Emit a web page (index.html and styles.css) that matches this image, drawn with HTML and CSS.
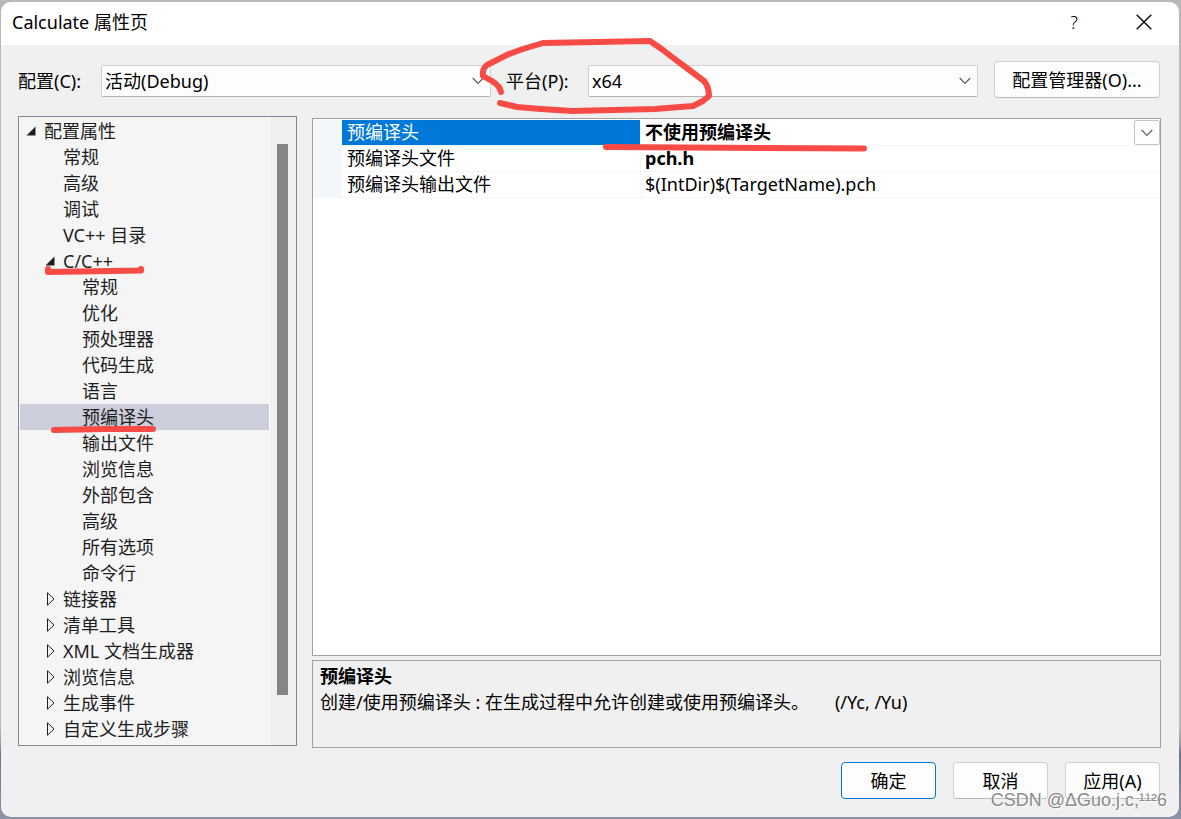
FILE: index.html
```html
<!DOCTYPE html>
<html lang="zh-CN">
<head>
<meta charset="utf-8">
<title>Calculate 属性页</title>
<link rel="stylesheet" href="styles.css">
</head>
<body>
<main class="dialog">
  <header class="titlebar">
    <h1 class="title">Calculate 属性页</h1>
    <button class="caption-btn help" type="button" aria-label="帮助">?</button>
    <button class="caption-btn" type="button" aria-label="关闭">
      <svg width="16" height="16" viewBox="0 0 16 16" fill="none" stroke="#111" stroke-width="1.5"><path d="M.7.7l14.6 14.6M15.3.7L.7 15.3"/></svg>
    </button>
  </header>

  <div class="toolbar">
    <label for="config">配置(C):</label>
    <div class="combo">
      <select id="config"><option>活动(Debug)</option></select>
      <svg class="chevron" width="12" height="8" viewBox="0 0 12 8"><path d="M.7 1l5.3 5.3L11.3 1"/></svg>
    </div>
    <label class="second" for="platform">平台(P):</label>
    <div class="combo">
      <select id="platform"><option>x64</option></select>
      <svg class="chevron" width="12" height="8" viewBox="0 0 12 8"><path d="M.7 1l5.3 5.3L11.3 1"/></svg>
    </div>
    <button class="btn manager" type="button">配置管理器(O)...</button>
  </div>

  <div class="content">
    <nav class="tree-box">
      <ul class="tree">
        <li><div class="node"><svg class="arrow" viewBox="0 0 10 14"><path class="open" d="M9.500 2.500v9H.5z"/></svg>配置属性</div>
          <ul>
            <li><div class="node leaf">常规</div></li>
            <li><div class="node leaf">高级</div></li>
            <li><div class="node leaf">调试</div></li>
            <li><div class="node leaf">VC++ 目录</div></li>
            <li><div class="node"><svg class="arrow" viewBox="0 0 10 14"><path class="open" d="M9.500 2.500v9H.5z"/></svg>C/C++</div>
              <ul>
                <li><div class="node leaf">常规</div></li>
                <li><div class="node leaf">优化</div></li>
                <li><div class="node leaf">预处理器</div></li>
                <li><div class="node leaf">代码生成</div></li>
                <li><div class="node leaf">语言</div></li>
                <li><div class="node leaf selected">预编译头</div></li>
                <li><div class="node leaf">输出文件</div></li>
                <li><div class="node leaf">浏览信息</div></li>
                <li><div class="node leaf">外部包含</div></li>
                <li><div class="node leaf">高级</div></li>
                <li><div class="node leaf">所有选项</div></li>
                <li><div class="node leaf">命令行</div></li>
              </ul>
            </li>
            <li><div class="node"><svg class="arrow" viewBox="0 0 10 14"><path class="closed" d="M2.500.8v12.400l6.500-6.200z"/></svg>链接器</div></li>
            <li><div class="node"><svg class="arrow" viewBox="0 0 10 14"><path class="closed" d="M2.500.8v12.400l6.500-6.200z"/></svg>清单工具</div></li>
            <li><div class="node"><svg class="arrow" viewBox="0 0 10 14"><path class="closed" d="M2.500.8v12.400l6.500-6.200z"/></svg>XML 文档生成器</div></li>
            <li><div class="node"><svg class="arrow" viewBox="0 0 10 14"><path class="closed" d="M2.500.8v12.400l6.500-6.200z"/></svg>浏览信息</div></li>
            <li><div class="node"><svg class="arrow" viewBox="0 0 10 14"><path class="closed" d="M2.500.8v12.400l6.500-6.200z"/></svg>生成事件</div></li>
            <li><div class="node"><svg class="arrow" viewBox="0 0 10 14"><path class="closed" d="M2.500.8v12.400l6.500-6.200z"/></svg>自定义生成步骤</div></li>
          </ul>
        </li>
      </ul>
      <div class="scrollbar"><div class="thumb"></div></div>
    </nav>

    <div class="right">
      <section class="grid-box">
        <table class="props">
          <colgroup><col class="c-gutter"><col class="c-name"><col></colgroup>
          <tbody>
            <tr class="current"><td class="gutter"></td><th scope="row">预编译头</th>
              <td><div class="value"><b>不使用预编译头</b><button class="drop" type="button" aria-label="展开"><svg class="chev" width="12" height="8" viewBox="0 0 12 8"><path d="M.7 1l5.3 5.3L11.3 1"/></svg></button></div></td></tr>
            <tr><td class="gutter"></td><th scope="row">预编译头文件</th><td><b>pch.h</b></td></tr>
            <tr><td class="gutter"></td><th scope="row">预编译头输出文件</th><td>$(IntDir)$(TargetName).pch</td></tr>
          </tbody>
        </table>
      </section>
      <section class="desc">
        <h2>预编译头</h2>
        <p><span>创建/使用预编译头 : 在生成过程中允许创建或使用预编译头。</span><span>(/Yc, /Yu)</span></p>
      </section>
    </div>
  </div>

  <footer class="actions">
    <button class="btn primary" type="button">确定</button>
    <button class="btn" type="button">取消</button>
    <button class="btn" type="button">应用(A)</button>
  </footer>
</main>

<svg class="ink" width="1181" height="819" viewBox="0 0 1181 819" aria-hidden="true">
  <path d="M501 92Q500 86 492 81L483 76Q482 69 487 65L509 54L523 49L543 43L650 41L663 50L672 57L684 66L704 81Q709 87 709 96L703 101L693 106L655 109L572 111L541 109L517 107L500 103"/>
  <path d="M606 147L864 148.500"/>
  <path d="M48 269V272L141 270.500V269"/>
  <path d="M54 430L105 429L153 429"/>
</svg>
<div class="watermark">CSDN @ΔGuo.j.c,¹¹²6</div>
</body>
</html>
```
FILE: styles.css
```css
* { box-sizing: border-box; }

body {
  margin: 0;
  min-height: 100vh;
  padding: 2px 2px 2px 1px;
  display: flex;
  position: relative;
  overflow: hidden;
  background: linear-gradient(#b8b8b8 0 728px, #a5a5aa 740px, #6d7290 755px, #8f93a6 100%);
  font: 18px/26px "Noto Sans", "Noto Sans CJK SC", sans-serif;
  color: #000;
}

button, select { font: inherit; color: inherit; }

.dialog {
  flex: 1;
  display: flex;
  flex-direction: column;
  background: #f0f0f0;
  border-radius: 10px;
  overflow: hidden;
}

.titlebar {
  display: flex;
  align-items: center;
  height: 43px;
  padding: 0 0 3px 11px;
  background: #fff;
}

.title {
  flex: 1;
  margin: 0;
  font-size: 18px;
  font-weight: 400;
}

.caption-btn {
  width: 70px;
  height: 40px;
  padding: 0;
  border: 0;
  background: none;
  display: flex;
  align-items: center;
  justify-content: center;
}

.help { font-weight: 300; }

.toolbar {
  display: grid;
  grid-template-columns: 83px 1fr 97px 1fr 182px;
  align-items: end;
  padding: 16px 19px 0 17px;
}

.toolbar label { line-height: 34px; }
.second { padding-left: 15px; }

.combo {
  position: relative;
  padding-bottom: 1px;
}

.combo select {
  appearance: none;
  display: block;
  width: 100%;
  height: 32px;
  padding: 0 30px 0 3px;
  border: 1px solid #d0d0d0;
  border-bottom-color: #b4b4b4;
  border-radius: 2px;
  background: #fdfdfd;
}

.chevron {
  position: absolute;
  right: 7px;
  top: 12px;
}

.chevron, .chev {
  fill: none;
  stroke: #5c5c5c;
  stroke-width: 1.2;
}

.btn {
  width: 95px;
  height: 37px;
  padding: 0;
  border: 1px solid #d0d0d0;
  border-bottom-color: #bababa;
  border-radius: 4px;
  background: #fdfdfd;
}

.manager { width: 166px; justify-self: end; }
.primary { border-color: #0078d4; }

.content {
  flex: 1;
  display: flex;
  gap: 15px;
  padding: 18px 18px 0 17px;
}

.tree-box {
  width: 279px;
  margin-bottom: 2px;
  display: flex;
  border: 1px solid #828790;
  background: #f5f5f5;
  color: #1e1e1e;
}

.tree {
  flex: 1;
  padding: 1px 0 3px 1px;
}

.tree, .tree ul { margin: 0; list-style: none; }
.tree ul { padding: 0; }

.node {
  display: flex;
  align-items: center;
  gap: 8px;
  height: 26px;
  padding-left: 6px;
}

.tree ul .node { padding-left: 25px; }
.tree ul .leaf { padding-left: 43px; }
.tree ul ul .leaf { padding-left: 62px; }
.selected { background: #cccedb; }

.arrow { width: 10px; height: 14px; }
.open { fill: #1e1e1e; }
.closed { fill: none; stroke: #1e1e1e; }

.scrollbar {
  width: 27px;
  padding: 27px 8px 50px 7px;
  border-left: 1px solid #fff;
  background: #f0f0f0;
  display: flex;
}

.thumb { flex: 1; background: #858585; }

.right {
  flex: 1;
  display: flex;
  flex-direction: column;
  gap: 4px;
  padding-top: 2px;
}

.grid-box {
  flex: 1;
  padding-top: 1px;
  border: 1px solid #a0a0a0;
  background: #fff;
}

.props {
  width: 100%;
  table-layout: fixed;
  border-collapse: separate;
  border-spacing: 0;
}

.c-gutter { width: 29px; }
.c-name { width: 299px; }

.props th, .props td {
  height: 26px;
  padding: 0 0 0 4px;
  line-height: 25px;
  font-weight: 400;
  text-align: left;
  border-bottom: 1px solid #f3f6fb;
}

.props th { padding-left: 5px; border-right: 1px solid #f3f6fb; }
.props .gutter { background: #f3f6fb; }
.current th { background: #0078d7; color: #fff; }

.value {
  display: flex;
  justify-content: space-between;
}

.drop {
  width: 26px;
  height: 25px;
  padding: 0;
  border: 1px solid #c4c4c4;
  border-radius: 2px;
  background: #fdfdfd;
  display: flex;
  align-items: center;
  justify-content: center;
}

.desc {
  height: 88px;
  padding: 2px 7px;
  border: 1px solid #a0a0a0;
}

.desc h2 { margin: 0; font-size: 18px; line-height: 26px; }
.desc p { margin: 0; display: flex; gap: 26px; }

.actions {
  display: flex;
  justify-content: flex-end;
  gap: 17px;
  padding: 14px 19px 18px;
}

.ink {
  position: absolute;
  left: 0;
  top: 0;
  fill: none;
  stroke: #f84b46;
  stroke-width: 6;
  stroke-linecap: round;
  stroke-linejoin: round;
  pointer-events: none;
}

.watermark {
  position: absolute;
  right: 14px;
  bottom: 7px;
  font: 18px/24px "Liberation Sans", "Noto Sans", sans-serif;
  color: #8c8c8c;
  text-shadow: 1px 1px 0 #fff;
  pointer-events: none;
}
```
